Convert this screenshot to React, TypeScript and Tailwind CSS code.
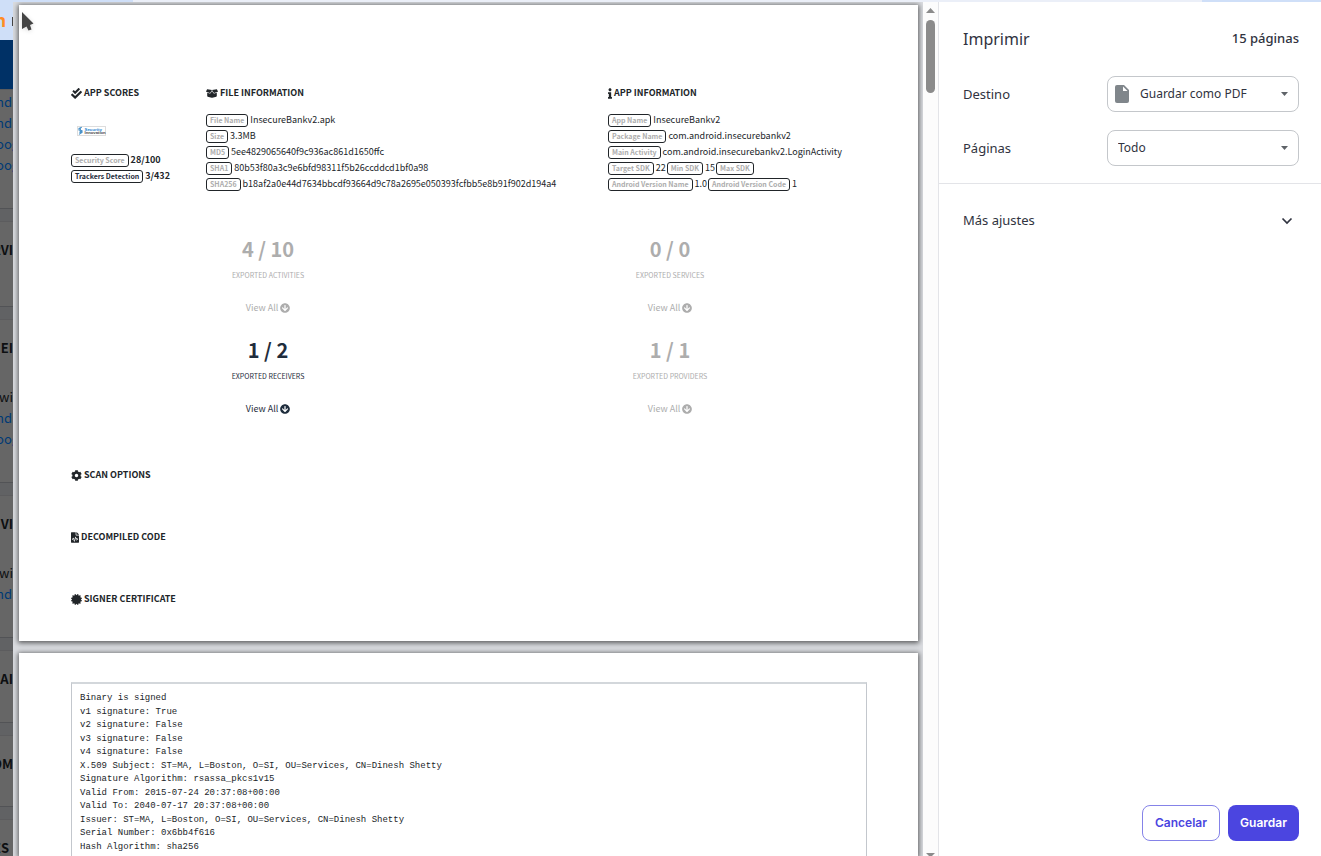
import React from "react";
import {
  FaArrowCircleDown,
  FaBoxOpen,
  FaCertificate,
  FaCheckDouble,
  FaCog,
  FaFileCode,
  FaInfo,
} from "react-icons/fa";

const docFont = "font-['Noto_Sans_CJK_SC',sans-serif]";

function Tag({ children, dark }: { children: string; dark?: boolean }) {
  return (
    <span
      className={`mr-[2px] inline-flex h-[13px] items-center rounded-[3px] border border-[#212529] px-[3px] text-[7px] leading-none font-bold ${
        dark ? "text-[#1f2d3d]" : "text-[#adadad]"
      }`}
    >
      {children}
    </span>
  );
}

function Heading({ icon, children }: { icon: React.ReactNode; children: string }) {
  return (
    <h2 className="flex h-4 items-center gap-[2px] text-[9px] font-bold whitespace-nowrap text-[#212529]">
      {icon}
      <span>{children}</span>
    </h2>
  );
}

function Line({ items }: { items: [string, string][] }) {
  return (
    <p className="flex h-4 items-center whitespace-nowrap text-[#212529]">
      {items.map(([label, value]) => (
        <React.Fragment key={label}>
          <Tag>{label}</Tag>
          {value && <span className="mr-px">{value}</span>}
        </React.Fragment>
      ))}
    </p>
  );
}

function Stat({ value, label, dark }: { value: string; label: string; dark?: boolean }) {
  return (
    <div className={`flex h-[101px] w-[124px] flex-col items-center ${dark ? "text-[#1f2d3d]" : "text-[#adadad]"}`}>
      <strong className="h-[30px] text-[20px] leading-[30px] font-bold">{value}</strong>
      <span className="mt-[3px] h-4 text-[7px] leading-4 whitespace-nowrap">{label}</span>
      <a href="#all" className="mt-[17px] flex h-4 items-center gap-[2px] text-[9px]">
        View All <FaArrowCircleDown className="size-[10px]" />
      </a>
    </div>
  );
}

function SecurityLogo() {
  return (
    <svg viewBox="0 0 29 10" className="h-[10px] w-[29px]" aria-label="Security Innovation">
      <rect x="0.5" y="0.5" width="28" height="9" fill="#fff" stroke="#ddd" />
      <path d="M4.800 1.300L2 2.400V4l3 .6v1.800L2 8.400M2.200 6.200L5 5.200M3.400 1.800v6" stroke="#4a93c9" strokeWidth="1.100" fill="none" />
      <text x="7.500" y="4.800" fontSize="4.400" fontWeight="bold" fontFamily="Liberation Sans" fill="#2785d0">Security</text>
      <text x="7.500" y="8.300" fontSize="4.200" fontWeight="bold" fontFamily="Liberation Sans" fill="#454545">Innovation</text>
    </svg>
  );
}

const certificate = [
  "Binary is signed",
  "v1 signature: True",
  "v2 signature: False",
  "v3 signature: False",
  "v4 signature: False",
  "X.509 Subject: ST=MA, L=Boston, O=SI, OU=Services, CN=Dinesh Shetty",
  "Signature Algorithm: rsassa_pkcs1v15",
  "Valid From: 2015-07-24 20:37:08+00:00",
  "Valid To: 2040-07-17 20:37:08+00:00",
  "Issuer: ST=MA, L=Boston, O=SI, OU=Services, CN=Dinesh Shetty",
  "Serial Number: 0x6bb4f616",
  "Hash Algorithm: sha256",
];

function Strip() {
  const card =
    "mb-3 flex shrink-0 flex-col overflow-hidden border-y border-t-[#5c5c5e] border-b-[#525356] bg-[#666] whitespace-nowrap";
  const title = "self-end text-[13px] leading-5 font-bold text-[#0d0f11]";
  const body = "mt-7 self-end text-[13px] leading-[21px] text-[#0d0f11]";
  const link = "-ml-1 text-[13px] leading-[21px] text-[#003a75]";
  return (
    <div className={`flex w-[13px] shrink-0 flex-col overflow-hidden bg-[#616264] ${docFont}`}>
      <div className="flex h-[38px] shrink-0 items-center justify-between overflow-hidden bg-[#cfdff8]">
        <span className="-ml-[5px] font-['Noto_Sans',sans-serif] text-[17px] font-bold text-[#ff8c24]">n</span>
        <span className="h-[9px] w-px bg-[#444]" />
      </div>
      <div className="h-[49px] shrink-0 bg-[#003166]" />
      <div className={`${card} h-[120px] pt-px`}>
        <span className={link}>ndr</span>
        <span className={link}>ndr</span>
        <span className={link}>oog</span>
        <span className={link}>oog</span>
      </div>
      <div className={`${card} h-[86px] pt-[18px]`}>
        <span className={title}>RVI</span>
      </div>
      <div className={`${card} h-[164px] pt-[18px]`}>
        <span className={title}>EI</span>
        <span className={body}>wi</span>
        <span className={link}>ndr</span>
        <span className={link}>oog</span>
      </div>
      <div className={`${card} h-[143px] pt-[18px]`}>
        <span className={title}>VI</span>
        <span className={body}>wi</span>
        <span className={link}>ndr</span>
      </div>
      <div className={`${card} h-[73px] pt-[18px]`}>
        <span className={title}>RAI</span>
      </div>
      <div className={`${card} h-[72px] pt-[18px]`}>
        <span className={title}>OM</span>
      </div>
      <div className={`${card} h-[72px] pt-[18px] pr-1`}>
        <span className={title}>ES</span>
      </div>
    </div>
  );
}

function SelectArrow() {
  return (
    <svg viewBox="0 0 7 4" className="pointer-events-none absolute top-4 right-[11px] h-1 w-[7px]">
      <path d="M0 0h7L3.500 4z" fill="#5f6368" />
    </svg>
  );
}

const pageShadow = "bg-white shadow-[0_1px_5px_1px_rgba(0,0,0,0.6)]";
const selectBox =
  "h-9 w-full appearance-none rounded-lg border border-[#c4c7cb] bg-white pr-8 text-[12px] leading-5 text-[#303340]";

export default function App() {
  return (
    <div className="flex h-screen flex-col overflow-hidden bg-white">
      <div className="flex h-[2px] shrink-0 justify-between bg-[#ebeff8]">
        <span className="w-[133px] bg-[#cfdff8]" />
        <span className="w-[119px] bg-[#cfdff8]" />
      </div>
      <div className="flex min-h-0 flex-1">
        <Strip />
        <main
          className={`relative flex min-w-0 flex-1 flex-col gap-3 overflow-hidden bg-[#dadce0] pt-[3px] pr-[5px] pl-[6px] ${docFont}`}
        >
          <svg viewBox="0 0 14 22" className="absolute top-[9px] left-2 h-[22px] w-[14px] drop-shadow-sm" aria-hidden="true">
            <path d="M1 1L12.500 12.500L9 14L10.500 18.500L7.500 19.500L5.500 15.500L1 18z" fill="#444" />
          </svg>
          <section className={`flex h-[636px] shrink-0 flex-col px-[52px] pt-20 text-[9px] ${pageShadow}`}>
            <div className="flex">
              <div className="w-[135px] shrink-0">
                <Heading icon={<FaCheckDouble className="size-[11px]" />}>APP SCORES</Heading>
                <div className="mt-[25px] mb-4 ml-[6px]">
                  <SecurityLogo />
                </div>
                <p className="flex h-4 items-center font-bold whitespace-nowrap text-[#212529]">
                  <Tag>Security Score</Tag>28/100
                </p>
                <p className="flex h-4 items-center font-bold whitespace-nowrap text-[#212529]">
                  <Tag dark>Trackers Detection</Tag>3/432
                </p>
              </div>
              <div className="w-[402px] shrink-0">
                <Heading icon={<FaBoxOpen className="h-[11px] w-3" />}>FILE INFORMATION</Heading>
                <div className="mt-[11px]">
                  <Line items={[["File Name", "InsecureBankv2.apk"]]} />
                  <Line items={[["Size", "3.3MB"]]} />
                  <Line items={[["MD5", "5ee4829065640f9c936ac861d1650ffc"]]} />
                  <Line items={[["SHA1", "80b53f80a3c9e6bfd98311f5b26ccddcd1bf0a98"]]} />
                  <Line items={[["SHA256", "b18af2a0e44d7634bbcdf93664d9c78a2695e050393fcfbb5e8b91f902d194a4"]]} />
                </div>
              </div>
              <div className="min-w-0 flex-1">
                <Heading icon={<FaInfo className="h-[11px] w-1" />}>APP INFORMATION</Heading>
                <div className="mt-[11px]">
                  <Line items={[["App Name", "InsecureBankv2"]]} />
                  <Line items={[["Package Name", "com.android.insecurebankv2"]]} />
                  <Line items={[["Main Activity", "com.android.insecurebankv2.LoginActivity"]]} />
                  <Line items={[["Target SDK", "22"], ["Min SDK", "15"], ["Max SDK", ""]]} />
                  <Line items={[["Android Version Name", "1.0"], ["Android Version Code", "1"]]} />
                </div>
              </div>
            </div>
            <div className="mt-[42px] ml-[135px] grid grid-cols-[402px_124px]">
              <Stat value="4 / 10" label="EXPORTED ACTIVITIES" />
              <Stat value="0 / 0" label="EXPORTED SERVICES" />
              <Stat value="1 / 2" label="EXPORTED RECEIVERS" dark />
              <Stat value="1 / 1" label="EXPORTED PROVIDERS" />
            </div>
            <div className="mt-[31px] flex flex-col gap-[46px]">
              <Heading icon={<FaCog className="size-[11px]" />}>SCAN OPTIONS</Heading>
              <Heading icon={<FaFileCode className="h-[11px] w-2" />}>DECOMPILED CODE</Heading>
              <Heading icon={<FaCertificate className="size-[11px]" />}>SIGNER CERTIFICATE</Heading>
            </div>
          </section>
          <section className={`flex-1 pt-[29px] pr-[51px] pl-[52px] ${pageShadow}`}>
            <div className="h-full border-x border-t-2 border-x-[#c3c7cd] border-t-[#d3d7db] px-2 pt-2">
              <div className="flex h-[162px] flex-col justify-between font-['Liberation_Mono',monospace] text-[9px] leading-[13px] text-[#212529]">
                {certificate.map((line) => (
                  <p key={line} className="whitespace-nowrap">{line}</p>
                ))}
              </div>
            </div>
          </section>
        </main>
        <div className="flex w-[15px] shrink-0 flex-col items-center justify-between overflow-hidden bg-[#fcfcfc] pt-[6px]">
          <div className="flex flex-col items-center gap-[7px]">
            <svg viewBox="0 0 9 5" className="h-[5px] w-[9px]">
              <path d="M0 5L4.500 0L9 5z" fill="#8b8b8b" />
            </svg>
            <div className="h-[73px] w-[9px] rounded-full bg-[#8b8b8b]" />
          </div>
          <svg viewBox="0 0 9 3" className="h-[3px] w-[9px]">
            <path d="M0 0h9L6 3H3z" fill="#8b8b8b" />
          </svg>
        </div>
        <aside className="flex w-[383px] shrink-0 flex-col border-l border-[#e3e4e8] bg-white font-['Noto_Sans',sans-serif] text-[13px] text-[#303340]">
          <header className="flex h-[74px] items-center justify-between pr-[22px] pb-px pl-6">
            <h1 className="text-[16px]">Imprimir</h1>
            <span className="font-medium">15 páginas</span>
          </header>
          <div className="flex flex-col gap-[18px] border-b border-[#e3e4e8] pr-[22px] pb-[17px] pl-6">
            <div className="flex items-center">
              <label htmlFor="dest" className="flex-1 pt-[2px]">Destino</label>
              <div className="relative w-48">
                <select id="dest" className={`${selectBox} pl-8`}>
                  <option>Guardar como PDF</option>
                </select>
                <svg viewBox="0 0 14 18" className="pointer-events-none absolute top-[9px] left-2 h-[18px] w-[14px]">
                  <path d="M2 0h7l5 5v11a2 2 0 0 1-2 2H2a2 2 0 0 1-2-2V2a2 2 0 0 1 2-2z" fill="#80868b" />
                  <path d="M8 1.500V6h4.500z" fill="#fff" />
                </svg>
                <SelectArrow />
              </div>
            </div>
            <div className="flex items-center">
              <label htmlFor="pages" className="flex-1 pt-[2px]">Páginas</label>
              <div className="relative w-48">
                <select id="pages" className={`${selectBox} pl-[10px]`}>
                  <option>Todo</option>
                </select>
                <SelectArrow />
              </div>
            </div>
          </div>
          <button className="flex h-[73px] items-center justify-between pr-7 pl-6">
            Más ajustes
            <svg viewBox="0 0 12 8" className="h-2 w-3">
              <path d="M1.500 1.500L6 6l4.500-4.500" fill="none" stroke="#303340" strokeWidth="1.700" />
            </svg>
          </button>
          <footer className="mt-auto flex justify-end gap-2 pr-[22px] pb-[15px] font-['Inter',sans-serif] text-[12px] font-semibold">
            <button className="h-9 w-[78px] rounded-lg border border-[#8583e8] text-[#4b45e0]">Cancelar</button>
            <button className="h-9 w-[71px] rounded-lg bg-[#4b45e0] text-white">Guardar</button>
          </footer>
        </aside>
      </div>
    </div>
  );
}
